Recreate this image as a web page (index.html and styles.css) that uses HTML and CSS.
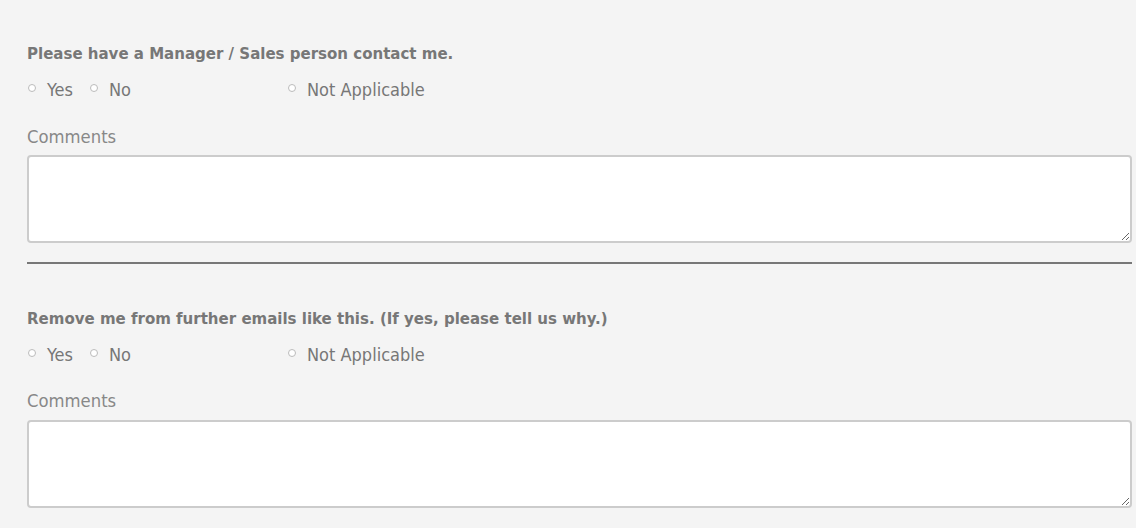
FILE: index.html
```html
<!DOCTYPE html>
<html>
<head>
<meta charset="utf-8">
<link rel="stylesheet" href="styles.css">
</head>
<body>
<div class="form">
  <div class="question">
    <div class="q-title">Please have a Manager / Sales person contact me.</div>
    <div class="options">
      <div class="opt-group">
        <label class="opt"><span class="radio"></span>Yes</label>
        <label class="opt"><span class="radio"></span>No</label>
      </div>
      <label class="opt"><span class="radio"></span>Not Applicable</label>
    </div>
    <div class="c-label">Comments</div>
    <textarea class="comments"></textarea>
  </div>
  <hr class="divider">
  <div class="question second">
    <div class="q-title">Remove me from further emails like this. (If yes, please tell us why.)</div>
    <div class="options">
      <div class="opt-group">
        <label class="opt"><span class="radio"></span>Yes</label>
        <label class="opt"><span class="radio"></span>No</label>
      </div>
      <label class="opt"><span class="radio"></span>Not Applicable</label>
    </div>
    <div class="c-label">Comments</div>
    <textarea class="comments"></textarea>
  </div>
</div>
</body>
</html>
```
FILE: styles.css
```css
html, body {
  margin: 0;
  padding: 0;
  background: #f4f4f4;
}
body {
  font-family: "DejaVu Sans Condensed", "DejaVu Sans", sans-serif;
  color: #777;
}
.form {
  padding: 43px 4px 0 27px;
}
.q-title {
  font-size: 16.7px;
  line-height: 20px;
  font-weight: bold;
  color: #777;
}
.options {
  display: flex;
  margin-top: 17px;
  height: 20px;
  align-items: center;
}
.opt-group {
  display: flex;
  width: 260px;
  gap: 16px;
}
.opt {
  display: flex;
  align-items: center;
  font-size: 18px;
  line-height: 20px;
  color: #777;
}
.radio {
  width: 6px;
  height: 6px;
  border: 1px solid #bbb;
  border-radius: 50%;
  background: #fff;
  margin-left: 1px;
  margin-right: 11px;
  margin-top: -4px;
}
.c-label {
  margin-top: 27px;
  font-size: 18.3px;
  line-height: 20px;
  color: #888;
}
.comments {
  display: block;
  box-sizing: border-box;
  width: 100%;
  height: 88px;
  margin: 8px 0 0;
  border: 2px solid #ccc;
  border-radius: 4px;
  background: #fff;
  resize: vertical;
}
.divider {
  margin: 19px 0 0;
  border: 0;
  height: 2px;
  background: #777;
}
.second {
  padding-top: 44px;
}
.second .c-label {
  margin-top: 26px;
}
.second .comments {
  margin-top: 9px;
}
```
